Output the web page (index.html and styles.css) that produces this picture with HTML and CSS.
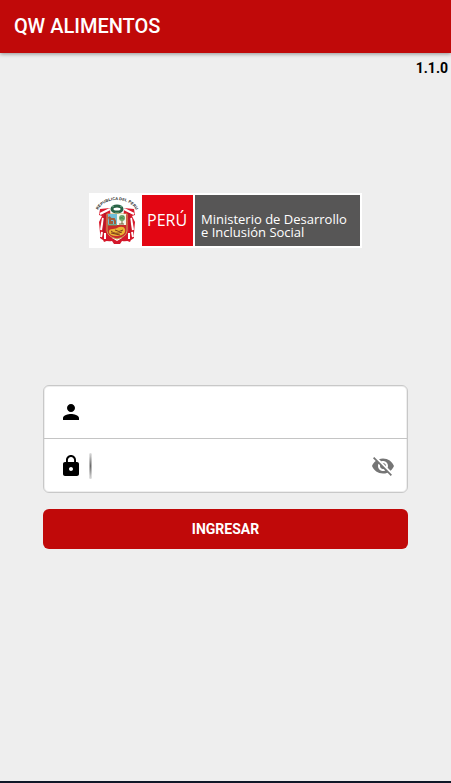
FILE: index.html
```html
<!DOCTYPE html>
<html lang="es">
  <head>
    <meta charset="UTF-8" />
    <meta name="viewport" content="width=device-width, initial-scale=1.0" />
    <title>QW ALIMENTOS</title>
    <link rel="stylesheet" href="styles.css">
  </head>
  <body>
    <header class="toolbar">
      <h1 class="toolbar-title">QW ALIMENTOS</h1>
    </header>

    <main class="content">
      <p class="version">1.1.0</p>

      <div class="logo">
        <svg class="escudo" viewBox="0 0 49 51" role="img" aria-label="Escudo del Perú">
          <defs>
            <path id="arco" d="M6 20 A20 15 0 0 1 46 20" />
          </defs>
          <text class="escudo-text"><textPath href="#arco" startOffset="50%">REPUBLICA DEL PERU</textPath></text>
          <!-- banderas -->
          <path d="M19 13 L9 14 L8 20 L11 21 L8 27 L9 38 L13 47 L21 44 Z" fill="#d81a2c" />
          <path d="M33 13 L43 14 L44 20 L41 21 L44 27 L43 38 L39 47 L31 44 Z" fill="#d81a2c" />
          <path d="M19 14 L9 19 M12 23 L10 35 M33 14 L43 19 M40 23 L42 35" fill="none" stroke="#fff" stroke-width="2" />
          <path d="M14 18 L13 38 M38 18 L39 38" fill="none" stroke="#b91828" stroke-width="2" />
          <path d="M9 36 Q14 43 21 43 L26 46 L31 43 Q38 43 43 36 L43 43 Q38 47 31 46 L29 49 H23 L21 46 Q14 47 9 43 Z" fill="#d3182b" />
          <path d="M11 37 L10 42 M14 38 V44 M38 38 V44 M41 37 L42 42" stroke="#fff" stroke-width="2" />
          <!-- corona -->
          <ellipse cx="26" cy="14" rx="5" ry="3" fill="#fff" stroke="#286246" stroke-width="3" />
          <path d="M21 12 L23 11 M31 12 L29 11 M24 18 H28" stroke="#71a986" />
          <!-- escudo -->
          <path d="M16 19 H36 V36 Q35 42 26 44 Q17 42 16 36 Z" fill="#c82b2b" stroke="#c9a65b" />
          <path d="M17 19 H26 V30 H17 Z" fill="#70bdd7" />
          <path d="M26 19 H35 V30 H26 Z" fill="#f4f5e9" />
          <path d="M19 29 V25 L18 22 L20 24 H23 L24 26 V29 M21 26 V29" fill="none" stroke="#a35c38" stroke-width="2" />
          <path d="M17 30 H26" stroke="#68a457" />
          <path d="M31 24 V29 M28 29 H33" stroke="#756238" />
          <circle cx="31" cy="23" r="3" fill="#71a868" />
          <path d="M29 22 L33 24 M29 24 L33 21" stroke="#397d47" stroke-width=".6" />
          <path d="M18 38 Q17 34 22 34 Q25 34 28 32 Q33 31 34 34 Q35 38 31 40 Q25 42 20 40 Z" fill="#ebb332" />
          <path d="M20 36 Q24 40 31 37 M24 35 Q28 38 32 35 M20 38 L29 40" fill="none" stroke="#7e3b1d" />
        </svg>
        <span class="logo-pais">PERÚ</span>
        <span class="logo-nombre">Ministerio de Desarrollo<br>e Inclusión Social</span>
      </div>

      <form class="login">
        <div class="fields">
          <div class="field">
            <label for="usuario" class="field-icon" aria-label="Usuario">
              <svg class="icon" viewBox="0 0 24 24">
                <path d="M12 12c2.210 0 4-1.790 4-4s-1.790-4-4-4-4 1.790-4 4 1.790 4 4 4zm0 2c-2.670 0-8 1.340-8 4v2h16v-2c0-2.660-5.330-4-8-4z" />
              </svg>
            </label>
            <input type="text" class="input" id="usuario" name="usuario" />
          </div>
          <div class="field">
            <label for="clave" class="field-icon" aria-label="Contraseña">
              <svg class="icon" viewBox="0 0 24 24">
                <path d="M18 8h-1V6c0-2.760-2.240-5-5-5S7 3.240 7 6v2H6c-1.100 0-2 .9-2 2v10c0 1.100.9 2 2 2h12c1.100 0 2-.9 2-2V10c0-1.100-.9-2-2-2zm-6 9c-1.100 0-2-.9-2-2s.9-2 2-2 2 .9 2 2-.9 2-2 2zm3.100-9H8.900V6c0-1.710 1.390-3.100 3.100-3.100s3.100 1.390 3.100 3.100v2z" />
              </svg>
            </label>
            <span class="cursor"></span>
            <input type="password" class="input" id="clave" name="clave" />
            <button type="button" class="toggle" id="toggle" aria-label="Mostrar contraseña">
              <svg class="icon-eye" viewBox="0 0 24 24">
                <path d="M12 7c2.760 0 5 2.240 5 5 0 .65-.13 1.260-.36 1.830l2.920 2.920c1.510-1.260 2.700-2.890 3.430-4.750-1.730-4.390-6-7.500-11-7.500-1.400 0-2.740.25-3.980.7l2.160 2.160C10.740 7.130 11.350 7 12 7zM2 4.270l2.280 2.280.46.46C3.080 8.300 1.780 10.020 1 12c1.730 4.390 6 7.500 11 7.500 1.550 0 3.030-.3 4.380-.84l.42.42L19.730 22 21 20.730 3.270 3 2 4.270zM7.530 9.800l1.550 1.550c-.05.21-.08.43-.08.65 0 1.660 1.340 3 3 3 .22 0 .44-.03.65-.08l1.550 1.550c-.67.33-1.410.53-2.200.53-2.760 0-5-2.240-5-5 0-.79.2-1.530.53-2.200zm4.310-.78l3.150 3.150.02-.16c0-1.660-1.340-3-3-3l-.17.01z" />
              </svg>
            </button>
          </div>
        </div>
        <button type="submit" class="loginBtn">INGRESAR</button>
      </form>
    </main>

    <div class="navbar"></div>

    <script>
      const clave = document.getElementById("clave");
      const toggle = document.getElementById("toggle");

      // mostrar u ocultar la contraseña
      toggle.addEventListener("click", () => {
        clave.type = clave.type === "password" ? "text" : "password";
      });
    </script>
  </body>
</html>
```
FILE: styles.css
```css
* {
  box-sizing: border-box;
}
body {
  display: flex;
  flex-direction: column;
  min-height: 100vh;
  margin: 0;
  background: #eee;
  font-family: Roboto, "Liberation Sans", sans-serif;
}
.toolbar {
  padding: 14px;
  background: #c00909;
  box-shadow: 0 1px 4px rgba(0, 0, 0, 0.4);
}
.toolbar-title {
  margin: 0;
  color: #fff;
  font-size: 20px;
  font-weight: 500;
  line-height: 25px;
}
.content {
  flex: 1;
  display: flex;
  flex-direction: column;
}
.version {
  margin: 0;
  padding: 5px 3px;
  text-align: right;
  font-size: 14px;
  font-weight: bold;
  line-height: 20px;
}
.logo {
  display: flex;
  align-self: center;
  gap: 2px;
  margin-top: 110px;
  padding: 2px;
  background: #fff;
  color: #fff;
  font-family: "Open Sans", "Noto Sans", sans-serif;
}
.escudo {
  width: 49px;
  height: 51px;
}
.escudo-text {
  fill: #222;
  font-family: "Liberation Sans", sans-serif;
  font-size: 4px;
  font-weight: bold;
  text-anchor: middle;
}
.logo-pais {
  width: 51px;
  padding-left: 5px;
  background: #e30613;
  font-size: 16px;
  line-height: 51px;
}
.logo-nombre {
  width: 165px;
  padding: 18px 6px 0;
  background: #575656;
  font-size: 13px;
  line-height: 13px;
  white-space: nowrap;
}
.login {
  margin: 137px 43px 0;
}
.fields {
  border: 1px solid #c8c8c8;
  border-radius: 6px;
  background: #fff;
  box-shadow: inset 0 0 0 1px #eee;
}
.field {
  display: flex;
  align-items: center;
  height: 52px;
  padding: 0 12px 0 15px;
}
.field + .field {
  height: 54px;
  border-top: 1px solid #c4c4c4;
}
.field-icon {
  display: flex;
}
.icon {
  width: 24px;
  height: 24px;
}
.cursor {
  width: 3px;
  height: 26px;
  margin-left: 6px;
  border-radius: 2px;
  background: radial-gradient(closest-side, #666, #ddd);
}
.input {
  flex: 1;
  min-width: 0;
  padding: 8px;
  border: none;
  outline: none;
  background: transparent;
  font-size: 16px;
}
.toggle {
  display: flex;
  padding: 0;
  border: none;
  background: none;
  cursor: pointer;
}
.icon-eye {
  width: 24px;
  height: 24px;
  fill: #757575;
}
.loginBtn {
  width: 100%;
  height: 40px;
  margin-top: 16px;
  border: none;
  border-radius: 6px;
  background: #c00909;
  color: #fff;
  font-family: inherit;
  font-size: 14px;
  font-weight: bold;
  cursor: pointer;
}
.navbar {
  height: 2px;
  background: #101828;
}
```
